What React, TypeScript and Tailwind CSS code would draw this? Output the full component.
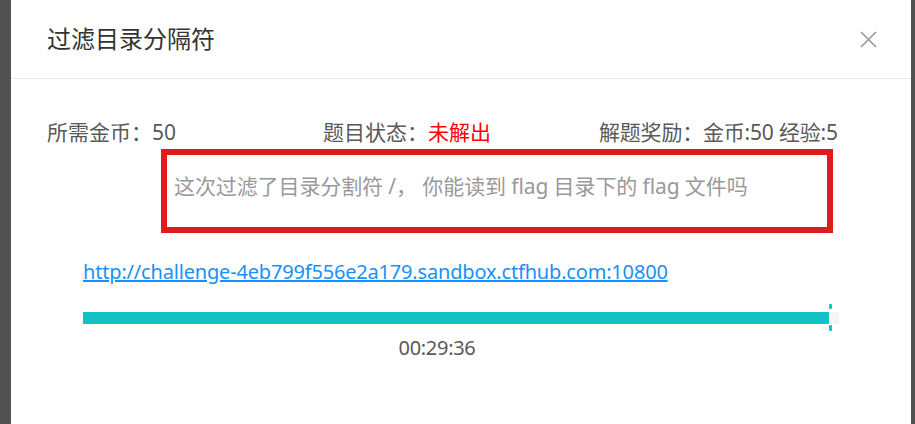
export default function App() {
  return (
    <div className="flex h-[424px] w-[915px] overflow-hidden bg-[#525252] pl-[11px] pr-[4px] font-['Noto_Sans','Noto_Sans_CJK_SC',sans-serif]">
      <div className="flex-1 bg-white">
        {/* header */}
        <header className="flex h-[79px] items-center justify-between border-b border-[#e8e8e8] pl-[36px] pr-[34px]">
          <h1 className="text-[24px] leading-[30px] text-[#333]">过滤目录分隔符</h1>
          <button className="text-[#999]" aria-label="close">
            <svg width="17" height="17" viewBox="0 0 17 17" fill="none" stroke="currentColor" strokeWidth="1.6">
              <path d="M1 1L16 16M16 1L1 16" />
            </svg>
          </button>
        </header>

        <div className="pt-[38px]">
          <div className="grid grid-cols-3 px-[36px] text-[21px] leading-[30px] text-[#595959]">
            <div>所需金币：50</div>
            <div>
              题目状态：<span className="text-[#ff0000]">未解出</span>
            </div>
            <div className="whitespace-nowrap tracking-[-0.2px]">解题奖励：金币:50 经验:5</div>
          </div>

          <div className="mt-[2px] ml-[150px] h-[84px] w-[672px] border-[6px] border-[#e21c1c] pl-[7px] pt-[16px]">
            <p className="text-[21px] leading-[30px] tracking-[-0.1px] text-[#999]">
              这次过滤了目录分割符 /， 你能读到 flag 目录下的 flag 文件吗
            </p>
          </div>

          <a
            href="#"
            className="mt-[24px] ml-[72px] block w-fit text-[20px] leading-[30px] tracking-[-0.18px] text-[#1890ff] underline"
          >
            http://challenge-4eb799f556e2a179.sandbox.ctfhub.com:10800
          </a>

          <div className="relative mt-[25px] ml-[72px] h-[12px] w-[756px] bg-[#f5f5f5]">
            <div className="h-full w-[746px] bg-[#13c2c2]" />
            <span className="absolute left-[746px] top-[-8px] h-[5px] w-[3px] rounded-[1px] bg-[#13c2c2]" />
            <span className="absolute left-[746px] top-[13px] h-[6px] w-[3px] rounded-[1px] bg-[#13c2c2]" />
          </div>

          <div className="mt-[9px] ml-[72px] w-[708px] text-center text-[20px] leading-[30px] tracking-[-0.3px] text-[#595959]">
            00:29:36
          </div>
        </div>
      </div>
    </div>
  );
}
